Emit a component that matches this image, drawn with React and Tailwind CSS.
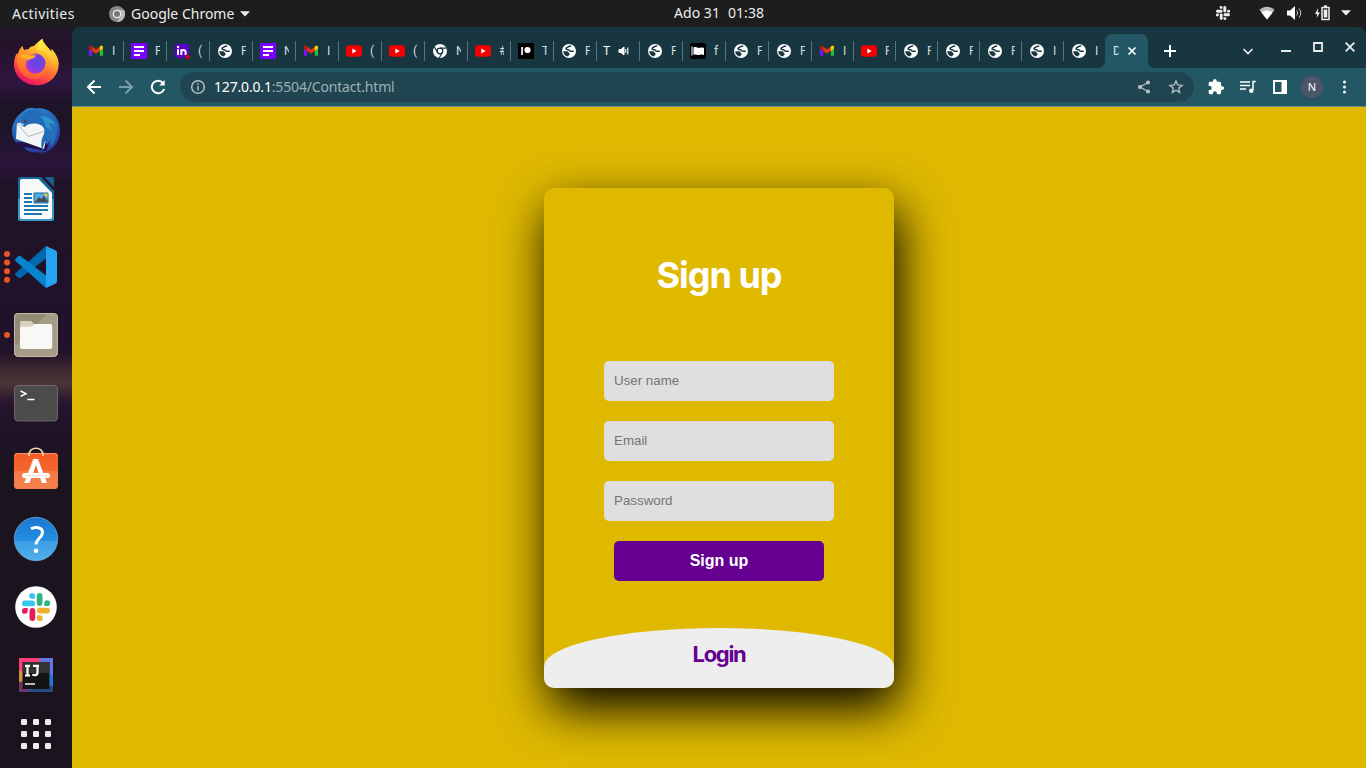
import React from "react";

const Globe = () => (
  <svg viewBox="0 0 16 16" className="h-4 w-4 shrink-0">
    <circle cx="8" cy="8" r="7" fill="#fff" />
    <path d="M9.600 2.900C7.800 2.900 7.600 4.200 6.200 4.400 4.600 4.800 4.700 6.500 6 6.600c1.500.1 2.200.2 2.700 1.100.7 1 2.300.2 3.400.5" fill="none" stroke="#17363f" strokeWidth="1.500" strokeLinecap="round" strokeLinejoin="round" />
    <path d="M2.200 8.300h3.600c1.600 0 2 .8 2 2 1.400.2 1.200 1.300.4 1.800-.7.400-.7 1-1.200 1.500-2.800-.3-4.700-2.500-4.800-5.300z" fill="#17363f" />
  </svg>
);
const Gmail = () => (
  <svg viewBox="0 0 16 16" className="h-4 w-4 shrink-0">
    <path d="M1 4.500v8.300h3.200V7z" fill="#7a17f5" />
    <path d="M15 4.500v8.300h-3.200V7z" fill="#22c13c" />
    <path d="M1 5.500V4c0-1.300 1.500-1.700 2.400-1L8 6.400 12.600 3c.9-.7 2.400-.3 2.400 1v1.500L8 10.700z" fill="#e03a12" />
    <path d="M11.800 3.700l.8-.7c.9-.7 2.400-.3 2.400 1v1.500l-3.200 2.400z" fill="#f6d20a" />
    <path d="M1 5.500V4c0-1.300 1.500-1.700 2.400-1l.8.700v4.200z" fill="#b1180e" />
  </svg>
);
const Form = () => (
  <svg viewBox="0 0 16 16" className="h-4 w-4 shrink-0">
    <path d="M0 0h16v16H0z" fill="#7b00ff" />
    <path d="M3 4h10M3 8h10M3 12h6" stroke="#fff" strokeWidth="1.800" />
  </svg>
);
const YouTube = () => (
  <svg viewBox="0 0 16 16" className="h-4 w-4 shrink-0">
    <rect y="2.300" width="16" height="11.400" rx="3" fill="#f50000" />
    <path d="M6.300 5.500v5L10.700 8z" fill="#fff" />
  </svg>
);
const LinkedIn = () => (
  <svg viewBox="0 0 16 16" className="h-4 w-4 shrink-0">
    <rect x="1" y="1" width="14" height="14" rx="1" fill="#5a00c8" />
    <path d="M4 6.300V12M7.300 12V6.300M7.300 9c0-2.600 4.300-2.900 4.300 0v3" fill="none" stroke="#fff" strokeWidth="2" />
    <circle cx="4" cy="4" r="1.200" fill="#fff" />
    <circle cx="13.800" cy="13.800" r="2.200" fill="#c40014" />
  </svg>
);
const ChromeMark = () => (
  <svg viewBox="0 0 16 16" className="h-4 w-4 shrink-0">
    <circle cx="8" cy="8" r="7" fill="#fff" />
    <circle cx="8" cy="8" r="2.800" fill="none" stroke="#17363f" strokeWidth="1.300" />
    <path d="M8 5.200h6.500M5.600 9.500 2.300 3.900M10.400 9.500 7.200 15" stroke="#17363f" strokeWidth="1.200" />
  </svg>
);
const Patreon = () => (
  <svg viewBox="0 0 16 16" className="h-4 w-4 shrink-0">
    <path d="M0 0h16v16H0z" fill="#000" />
    <path d="M3.200 4h1.700v8H3.200z" fill="#fff" />
    <circle cx="9.500" cy="7" r="3.100" fill="#fff" />
  </svg>
);
const Flag = () => (
  <svg viewBox="0 0 16 16" className="h-4 w-4 shrink-0">
    <rect width="16" height="16" rx="2" fill="#000" />
    <path d="M2 3.500v9" stroke="#fff" strokeWidth="1.100" />
    <path d="M3.500 4.500c3-1.500 4 1 6.500.3 1.500-.4 2.500-.4 4 .2v7c-3-1.400-4 .2-6 0-1.600-.1-2.600-.9-4.500-.2z" fill="#fff" />
  </svg>
);

const TABS = [
  [Gmail, "I"], [Form, "F"], [LinkedIn, "("], [Globe, "F"], [Form, "N"], [Gmail, "I"], [YouTube, "("],
  [YouTube, "("], [ChromeMark, "N"], [YouTube, "#"], [Patreon, "T"], [Globe, "F"], [null, "T"], [Globe, "F"],
  [Flag, "f"], [Globe, "F"], [Globe, "F"], [Gmail, "I"], [YouTube, "F"], [Globe, "F"], [Globe, "F"],
  [Globe, "F"], [Globe, "I"], [Globe, "I"],
];

function Tab({ icon: Icon, text, narrow, last }) {
  return (
    <div className={`flex shrink-0 items-center font-['Roboto',sans-serif] text-xs leading-4 ${narrow ? "w-[42px]" : "w-[43px]"}`}>
      {Icon ? (
        <>
          <span className="w-2 shrink-0" />
          <Icon />
          <span className={`ml-2 shrink-0 overflow-hidden text-[#d3dcdf] ${narrow ? "w-[4px]" : "w-[5px]"}`}>{text}</span>
        </>
      ) : (
        <>
          <span className="ml-[7px] w-2 text-white">{text}</span>
          <svg viewBox="0 0 12 12" className="ml-[7px] h-3 w-3" fill="none" stroke="#fff">
            <path d="M1 4.500h2L6 2v8L3 7.500H1z" fill="#fff" />
            <path d="M7.800 4v4M9.800 2.500v7" strokeWidth="1.100" />
          </svg>
        </>
      )}
      {!last && <span className="ml-auto h-5 w-px translate-x-px bg-[#537680]" />}
    </div>
  );
}

function Slack({ mono }) {
  const c = mono ? ["#eee", "#eee", "#eee", "#eee"] : ["#36c5f0", "#2eb67d", "#ecb22e", "#e01e5a"];
  return (
    <>
      <g fill={c[0]}><rect x="0" y="7.500" width="13" height="5.800" rx="2.900" /><path d="M13 5.700h-2.800A2.900 2.900 0 1 1 13 2.800z" /></g>
      <g fill={c[1]}><rect x="14.700" y="0" width="5.800" height="13" rx="2.900" /><path d="M22.300 13v-2.800a2.900 2.900 0 1 1 2.900 2.900z" /></g>
      <g fill={c[2]}><rect x="15" y="14.700" width="13" height="5.800" rx="2.900" /><path d="M15 22.300h2.800a2.900 2.900 0 1 1-2.900 2.900z" /></g>
      <g fill={c[3]}><rect x="7.500" y="15" width="5.800" height="13" rx="2.900" /><path d="M5.700 15v2.800A2.900 2.900 0 1 1 2.800 15z" /></g>
    </>
  );
}

function DockIcon({ children }) {
  return <svg viewBox="0 0 72 68" className="h-[68px] w-[72px] shrink-0">{children}</svg>;
}

function Dock() {
  return (
    <aside className="flex w-[72px] shrink-0 flex-col bg-[linear-gradient(to_bottom,#24172c_0px,#251229_20px,#2f1540_55px,#1f1427_75px,#1e1427_100px,#2b153b_138px,#1f1427_155px,#211129_325px,#3d2930_342px,#4d3639_356px,#281530_376px,#201329_395px,#1b141f_450px,#1b141f_741px)] pt-0.5">
      <DockIcon>
        <defs>
          <linearGradient id="ff1" x1=".8" y1="0" x2=".3" y2="1"><stop offset="0" stopColor="#fff44f" /><stop offset=".35" stopColor="#ffb52c" /><stop offset=".65" stopColor="#ff6039" /><stop offset="1" stopColor="#ec0b66" /></linearGradient>
          <radialGradient id="ff2" cx=".6" cy=".4" r=".7"><stop offset="0" stopColor="#5b4bea" /><stop offset=".5" stopColor="#7b3fe0" /><stop offset="1" stopColor="#b833d9" /></radialGradient>
          <linearGradient id="ff3" x1="0" y1="0" x2="0" y2="1"><stop offset="0" stopColor="#ffa51e" /><stop offset="1" stopColor="#ff6a2a" /></linearGradient>
          <linearGradient id="ff4" x1="0" y1="0" x2="0" y2="1"><stop offset="0" stopColor="#fff14b" /><stop offset=".6" stopColor="#ffc62f" /><stop offset="1" stopColor="#ff8a24" stopOpacity=".1" /></linearGradient>
        </defs>
        <path d="M22.500 16.500c.2 2.300 1 3.500 1.800 4.500 1.200-.7 2.600-.9 4.200-.8 1.200-2 3.200-3.200 5.500-3.200 2.500-3 5-5 8.300-7.300.6 3.600 3 6 6.700 10l2 3.500.6-3.500c4 4.600 7.100 9.500 7.100 15 0 12.500-9.800 21.500-22.200 21.500C23.500 56.200 14 46.600 14 35c0-4.500 1-8 3-11.200l.2 2.500c1.200-4 3.300-7.300 5.300-9.800z" fill="url(#ff1)" />
        <circle cx="35.500" cy="34.500" r="10" fill="url(#ff2)" />
        <path d="M17.500 26c2.500-2.600 7-3.600 11-2 2 .8 4.500 1.300 7.500 1.400-.5 2.700-2.500 4-6 5-3 1-4.300 3.200-4 6 .4 5.500 5 8.700 9.400 8.700 6.300 0 10.500-4.500 10-10.500 2.300 9-4 15.500-11.800 15.500C24 50 15 40 17.500 26z" fill="url(#ff3)" opacity=".7" />
        <path d="M20 27c3-1.500 6-1.500 9-.5 2 .6 4 .2 6.500.5-1.500 2.300-4 2.500-6.500 3.500-3-.5-6-1.500-9-3.500z" fill="#ffb32b" />
        <path d="M42.300 9.700c.6 3.600 3 6 6.700 10 5 6 8 14 3.500 23 1-8-1.500-14-6.500-18-2.300-1.800-5.500-3.200-9-3.700-.8-4.500 1.800-8.500 5.300-11.300z" fill="url(#ff4)" />
      </DockIcon>
      <DockIcon>
        <defs>
          <linearGradient id="tb" x1=".2" y1="0" x2=".6" y2="1"><stop offset="0" stopColor="#2a86cf" /><stop offset=".5" stopColor="#245fb4" /><stop offset="1" stopColor="#2b3796" /></linearGradient>
        </defs>
        <path d="M25 13c3-2.500 7-3 11-1.500C50 10 60 20.500 60 34c0 9-5 17-13 20.500l-7 2.700 2-2.300C28 58 12 48 12 34c0-8.500 5-16 13-21z" fill="url(#tb)" />
        <path d="M16 45c3 6 7.500 9 12 10l-4-5 22 4 3-8z" fill="#20104a" />
        <path d="M17 26.500 32 23l14 3 2 8-4 18L16 42z" fill="#f1f3f5" />
        <path d="m18 27 10 12.500L45 34" fill="none" stroke="#9fa4aa" strokeWidth=".8" />
        <path d="M22 29c-3-3-1-12 6-15 5-2 10-1 12 2 3 4 6 6 11 7 2 5 3 13 0 20l-2-3-1 8-3-4-3 10c-1-7-1-12 2-17 2-6-2-9-6-10-5-1-10-.5-13 3z" fill="#236bb9" />
        <path d="M40 16c8-1 14 5 17 11 1 9-1 17-6 23l-1-7-3 4c1-10 0-16-4-22z" fill="#256fbd" />
        <path d="M40 19c7 0 12 3 15 8l-7-1 5 8-7-4c-1-5-3-8-6-11z" fill="#36a6d0" opacity=".65" />
        <circle cx="25.200" cy="24.500" r="1.700" fill="#444453" />
        <path d="m20.500 26 1.500 4 2.500-3z" fill="#8ecbdd" />
      </DockIcon>
      <DockIcon>
        <path d="M21 12h33v41a3 3 0 0 1-3 3H21a3 3 0 0 1-3-3V15a3 3 0 0 1 3-3z" fill="#126b9c" />
        <path d="M18 34h36v19a3 3 0 0 1-3 3H21a3 3 0 0 1-3-3z" fill="#3a99c7" />
        <path d="M40 11h15v17h-1L38.500 12z" fill="#23152c" />
        <path d="M38 12h3l13 14v4z" fill="#126b9c" />
        <path d="M44.500 12H52a2 2 0 0 1 2 2v8z" fill="#14638f" />
        <path d="M22 14h16.500L52 28v24a2 2 0 0 1-2 2H22a2 2 0 0 1-2-2V16a2 2 0 0 1 2-2z" fill="#fafafa" />
        <path d="M24 29h8M24 33h8M24 37h8M24 41h24M24 45h24M24 49h18" stroke="#1a79ad" strokeWidth="1.800" />
        <path d="M34 28h14v10H34z" fill="#57aadd" stroke="#0e659a" strokeWidth="1" />
        <path d="m35 37 4-5 2 2 3-3 4 6z" fill="#4b4b4b" /><path d="M43.500 28.500h4v4z" fill="#ffc320" />
      </DockIcon>
      <DockIcon>
        <path d="M7 21h.01M7 29.600h.01M7 38.200h.01M7 46.800h.01" stroke="#eb5424" strokeWidth="6" strokeLinecap="round" />
        <path d="m15.500 42.200 2.800 2.500c.8.700 1.800.7 2.600.1L46 25.500V13L15.500 40.100c-.6.600-.6 1.500 0 2.100z" fill="#0068ac" />
        <path d="m15.500 25.800 2.800-2.500c.8-.7 1.800-.7 2.600-.1L46 42.500V55L15.500 27.900c-.6-.6-.6-1.500 0-2.100z" fill="#0883ce" />
        <path d="M46 13l9.200 4.300c1.200.6 1.800 1.400 1.800 2.700v28c0 1.300-.6 2.100-1.800 2.700L46 55z" fill="#25a3f3" />
      </DockIcon>
      <DockIcon>
        <circle cx="7" cy="34" r="3" fill="#eb5424" />
        <rect x="14" y="12" width="44" height="44" rx="4.500" fill="#a49c86" /><path d="M14 18v-2a4 4 0 0 1 4-4h30L14 46z" fill="#938b75" />
        <rect x="14.500" y="12.500" width="43" height="43" rx="4" fill="none" stroke="#c0b9a8" />
        <path d="M20 22a2 2 0 0 1 2-2h9l3 3h2v9H20z" fill="#d8d2c3" />
        <path d="M20 27.500c0-1.200.8-1.700 2-1.700h10l3-2.700h15.500c1.200 0 1.700.8 1.700 2V46c0 1.300-.8 2-2 2H22c-1.300 0-2-.8-2-2z" fill="#f9f8f6" />
      </DockIcon>
      <DockIcon>
        <rect x="14.500" y="16.500" width="43" height="35.500" rx="3.500" fill="#4b4b4b" stroke="#777" strokeWidth=".8" />
        <path d="m20.500 22 5.500 2.700-5.500 2.700M27.300 30.500h7.200" fill="none" stroke="#fff" strokeWidth="1.500" />
      </DockIcon>
      <DockIcon>
        <defs><linearGradient id="sw" x1="0" y1="0" x2="0" y2="1"><stop offset="0" stopColor="#f45b24" /><stop offset=".5" stopColor="#f46530" /><stop offset=".51" stopColor="#f37a47" /><stop offset="1" stopColor="#f5814d" /></linearGradient></defs>
        <rect x="14" y="16" width="44" height="36" rx="3.500" fill="url(#sw)" />
        <path d="M14.500 18.500c.5-1.500 1.500-2 3-2h37c1.500 0 2.500.5 3 2" fill="none" stroke="#ff9570" />
        <path d="M29 19v-1c0-9 14-9 14 0v1" fill="none" stroke="#f5dda6" strokeWidth="1.600" />
        <path d="M34 22h4l9 24h-5.200L36 28l-6.500 18H24z" fill="#fff" />
        <path d="m34 22-8.800 24H24l9-24z" fill="#fbd7c8" />
        <rect x="22" y="36" width="28" height="5" rx="2.500" fill="#fff" /><path d="M25 38.700h22" stroke="#f7c4af" strokeWidth=".7" />
      </DockIcon>
      <DockIcon>
        <defs><linearGradient id="hp" x1="0" y1="0" x2="0" y2="1"><stop offset="0" stopColor="#1c78d3" /><stop offset=".54" stopColor="#248ee0" /><stop offset=".55" stopColor="#3c9de5" /><stop offset="1" stopColor="#51afea" /></linearGradient></defs>
        <circle cx="36" cy="34" r="21.700" fill="url(#hp)" stroke="#6bb6ec" strokeWidth=".7" />
        <path d="M31 23.800c3.500-2 11.500-2.300 11.500 3.700 0 5-6.400 6.200-6.400 12" fill="none" stroke="#fff" strokeWidth="3" /><circle cx="36" cy="45.800" r="2.300" fill="#fff" />
      </DockIcon>
      <DockIcon>
        <circle cx="36" cy="34" r="20.800" fill="#fff" />
        <g transform="translate(22 20)"><Slack /></g>
      </DockIcon>
      <DockIcon>
        <path d="M19 17h34v34H19z" fill="#2477d8" />
        <path d="M19 17h24L30 36l-11 4z" fill="#fb3f78" /><path d="M38 17h15v18L42 22z" fill="#6475dd" />
        <path d="M19 29l6 3v14l-6-4z" fill="#d49040" /><path d="m19 41 6-1 5 11H19z" fill="#6c3768" /><path d="M28 51l7-6h18v6z" fill="#244a81" />
        <path d="M22.500 21h27v27h-27z" fill="#141414" /><path d="M23 21h26.500v11H23z" fill="#333" />
        <path d="M25 24.800h5M27.500 24.800v9M25 34.500h5M33 24.800h6M37.500 24.800v6.700c0 3-3.500 3.400-5 1.800" fill="none" stroke="#fff" strokeWidth="2.200" />
        <path d="M25 43h10" stroke="#bbb" strokeWidth="2" />
      </DockIcon>
      <svg viewBox="0 0 72 50" className="h-[50px] w-[72px] shrink-0" fill="#eeeeec">
        {[10, 22, 34].map((y) => [21, 33, 45].map((x) => <rect key={`${x}-${y}`} x={x} y={y} width="6" height="6" rx="1.300" />))}
      </svg>
    </aside>
  );
}

function TopBar() {
  return (
    <header className="grid h-[27px] shrink-0 grid-cols-[1fr_auto_1fr] items-center bg-[#1d1d1d] text-sm leading-none text-[#ececec]">
      <div className="flex items-center pl-3">
        <span className="w-[97px] tracking-[0.45px]">Activities</span>
        <svg viewBox="0 0 16 16" className="mr-1.5 h-4 w-4">
          <circle cx="8" cy="8" r="8" fill="#888" /><path d="M8 4h7a8 8 0 0 1-7 12l4-6z" fill="#bdbdbd" />
          <circle cx="8" cy="8" r="4.300" fill="#eee" /><circle cx="8" cy="8" r="3" fill="#777" />
        </svg>
        <span className="w-[105px] whitespace-nowrap">Google Chrome</span>
        <svg viewBox="0 0 10 6" className="ml-1 h-1.5 w-2.5"><path d="M0 .3h10L5 5.500z" fill="#eee" /></svg>
      </div>
      <div className="flex gap-2 whitespace-nowrap pb-px pl-[72px] tracking-[0.05px]"><span>Ado 31</span><span>01:38</span></div>
      <div className="flex items-center justify-end pb-0.5 pr-[15px]">
        <svg viewBox="0 0 28 28" className="mr-[29px] h-3.5 w-3.5"><Slack mono /></svg>
        <svg viewBox="0 0 16 14" className="mr-3 h-3.5 w-4"><path d="M.500 4C5-.3 11-.3 15.500 4L8 13.500z" fill="#bbb" /><path d="M2.500 6.500c3.500-2.600 7.500-2.600 11 0L8 13.500z" fill="#fff" /></svg>
        <svg viewBox="0 0 16 14" className="mr-3 h-3.5 w-4" fill="none" stroke="#ccc"><path d="M0 4.500h3L8 0v14L3 9.500H0z" fill="#fff" stroke="none" /><path d="M9.800 4.500q1.700 2.500 0 5M12 2.500q3.500 4.500 0 9" /></svg>
        <svg viewBox="0 0 15 16" className="mr-[11px] h-4 w-[15px]"><path d="M3.200 3 0 9h2.200L1.700 13 5 7.500H2.800z" fill="#eee" /><path d="M7 2.500h7v12H7zM9 1h3" fill="none" stroke="#eee" strokeWidth="1.500" /><path d="M8.700 4.500h3.600v8H8.700z" fill="#eee" /></svg>
        <svg viewBox="0 0 10 6" className="h-1.5 w-2.5"><path d="M0 .3h10L5 5.500z" fill="#eee" /></svg>
      </div>
    </header>
  );
}

function TabStrip() {
  return (
    <div className="flex h-[41px] items-stretch rounded-t-lg bg-[#17363f] pl-2">
      <div className="flex pt-[7px]">
        {TABS.map(([icon, text], i) => (
          <Tab key={i} icon={icon} text={text} narrow={i > 16} last={i === TABS.length - 1} />
        ))}
      </div>
      <svg viewBox="0 0 58 34" className="-ml-2 mt-[7px] h-[34px] w-[58px] shrink-0">
        <path d="M0 34c5 0 8-3 8-8V8c0-5 3-8 8-8h27c5 0 8 3 8 8v18c0 5 2 8 7 8z" fill="#235763" />
        <text x="16" y="21" fontSize="12" fill="#dce4e6" fontFamily="Roboto, sans-serif">D</text>
        <path d="M21.500 8h10v18h-10z" fill="#235763" />
        <path d="m31.500 13.500 7 7m0-7-7 7" stroke="#fff" strokeWidth="1.700" />
      </svg>
      <svg viewBox="0 0 14 14" className="ml-2 mt-[17px] h-3.5 w-3.5"><path d="M1 7h12M7 1v12" stroke="#fff" strokeWidth="2" /></svg>
      <div className="ml-auto flex gap-[22px] pr-[11px] pt-3.5">
        <svg viewBox="0 0 12 12" className="mr-[5px] mt-1 h-3 w-3"><path d="m1.500 4 4.500 4.500L10.500 4" fill="none" stroke="#e8eced" strokeWidth="1.700" /></svg>
        <svg viewBox="0 0 10 12" className="h-3 w-2.5"><path d="M0 10h10" stroke="#e8eced" strokeWidth="2" /></svg>
        <svg viewBox="0 0 10 12" className="h-3 w-2.5"><path d="M1 2h8v8H1z" fill="none" stroke="#e8eced" strokeWidth="1.800" /></svg>
        <svg viewBox="0 0 10 12" className="h-3 w-2.5"><path d="m.7 1.700 8.600 8.600m0-8.600-8.600 8.600" stroke="#e8eced" strokeWidth="1.800" /></svg>
      </div>
    </div>
  );
}

function Toolbar() {
  return (
    <div className="flex h-[39px] items-center border-b border-[#65909a] bg-[#235763] pl-[14px] pr-3.5">
      <svg viewBox="0 0 16 16" className="h-4 w-4" fill="none" stroke="#fff" strokeWidth="2"><path d="M15 8H2M8.500 1.500 2 8l6.500 6.500" /></svg>
      <svg viewBox="0 0 16 16" className="ml-4 h-4 w-4" fill="none" stroke="#7d9ea5" strokeWidth="2"><path d="M1 8h13M7.500 1.500 14 8l-6.500 6.500" /></svg>
      <svg viewBox="0 0 16 16" className="ml-4 h-4 w-4" fill="none" stroke="#fff" strokeWidth="2"><path d="M13 4a6.300 6.300 0 1 0 1.100 6" /><path d="M14.700 1v5.500H9.200l5.500-5.500z" fill="#fff" stroke="none" /></svg>
      <div className="ml-3.5 flex h-[30px] w-[1014px] items-center rounded-full bg-[#214550] pl-2.5 pr-2.5 text-sm leading-none text-[#9eb0b5]">
        <svg viewBox="0 0 16 16" className="mr-2 h-4 w-4" fill="none" stroke="#afbec2" strokeWidth="1.500"><circle cx="8" cy="8" r="6.300" /><path d="M8 7v4.500M8 4.200v1.600" /></svg>
        <span className="whitespace-nowrap tracking-[-0.17px]"><span className="text-white">127.0.0.1</span>:5504/Contact.html</span>
        <svg viewBox="0 0 14 14" className="ml-auto mr-[17px] h-3.5 w-3.5" fill="#b8c0c3" stroke="#b8c0c3" strokeWidth="1.300"><path d="M11 2.500 3 7l8 4.500" fill="none" /><circle cx="11" cy="2.500" r="1.400" /><circle cx="3" cy="7" r="1.400" /><circle cx="11" cy="11.500" r="1.400" /></svg>
        <svg viewBox="0 0 16 16" className="h-4 w-4" fill="none" stroke="#b8c0c3" strokeWidth="1.300"><path d="m8 2 1.700 4 4.300.4-3.300 2.800 1 4.300L8 11.200l-3.700 2.300 1-4.300L2 6.400 6.300 6z" /></svg>
      </div>
      <svg viewBox="0 0 24 24" className="ml-3.5 h-4 w-4 scale-110" fill="#fff"><path d="M20.500 11H19V7a2 2 0 0 0-2-2h-4V3.500a2.500 2.500 0 0 0-5 0V5H4a2 2 0 0 0-2 2v3.800h1.500a2.700 2.700 0 0 1 0 5.400H2V20a2 2 0 0 0 2 2h3.800v-1.500a2.700 2.700 0 0 1 5.400 0V22H17a2 2 0 0 0 2-2v-4h1.500a2.500 2.500 0 0 0 0-5z" /></svg>
      <svg viewBox="0 0 16 16" className="ml-4 h-4 w-4" fill="none" stroke="#fff" strokeWidth="1.500"><path d="M0 3h10M0 6.500h10M0 10h6M15.800 2.500H13V11" /><circle cx="11.300" cy="11.700" r="1.500" fill="#fff" /></svg>
      <svg viewBox="0 0 14 14" className="ml-[17px] h-3.5 w-3.5"><path d="M0 0h14v14H0z" fill="#fff" /><path d="M2 2h6.500v10H2z" fill="#235763" /></svg>
      <span className="ml-3.5 flex h-[22px] w-[22px] items-center justify-center rounded-full bg-[#4d5568] text-[11px] text-white">N</span>
      <svg viewBox="0 0 4 14" className="ml-[19px] h-3.5 w-1" fill="#fff"><circle cx="2.500" cy="2" r="1.500" /><circle cx="2.500" cy="7" r="1.500" /><circle cx="2.500" cy="12" r="1.500" /></svg>
    </div>
  );
}

function SignUpPage() {
  const field = "h-10 w-[230px] rounded-[5px] bg-[#e0dede] px-2.5 pb-0.5 font-['Liberation_Sans',sans-serif] text-[13.333px] text-black outline-none placeholder:text-[#757575]";
  return (
    <main className="flex min-h-0 flex-1 items-start justify-center overflow-hidden bg-[#dfb900] pt-[81px]">
      <form className="flex h-[500px] w-[350px] flex-col items-center overflow-hidden rounded-[10px] bg-[#dfb900] shadow-[5px_20px_50px_#000]" onSubmit={(e) => e.preventDefault()}>
        <h1 className="mt-[62px] flex h-[49px] shrink-0 items-center whitespace-nowrap font-['Inter',sans-serif] text-[36px] font-bold leading-none tracking-[-1px] text-white">Sign up</h1>
        <div className="mt-[62px] flex flex-col items-center gap-5">
          <input className={field} type="text" placeholder="User name" />
          <input className={field} type="email" placeholder="Email" />
          <input className={field} type="password" placeholder="Password" />
          <button className="h-10 w-[210px] rounded-[5px] bg-[#650090] font-['Liberation_Sans',sans-serif] text-base font-bold text-white">Sign up</button>
        </div>
        <div className="mt-[47px] flex h-[460px] w-full shrink-0 justify-center rounded-[50%/8.333%] bg-[#eee] pt-[14px]">
          <span className="font-['Inter',sans-serif] text-[22px] font-bold leading-[24px] tracking-[-1.3px] text-[#650090]">Login</span>
        </div>
      </form>
    </main>
  );
}

export default function App() {
  return (
    <div className="flex h-screen w-full flex-col overflow-hidden bg-[#1d1d1d] font-['Noto_Sans',sans-serif]">
      <TopBar />
      <div className="flex min-h-0 flex-1">
        <Dock />
        <div className="flex min-w-0 flex-1 flex-col">
          <TabStrip />
          <Toolbar />
          <SignUpPage />
        </div>
      </div>
    </div>
  );
}
